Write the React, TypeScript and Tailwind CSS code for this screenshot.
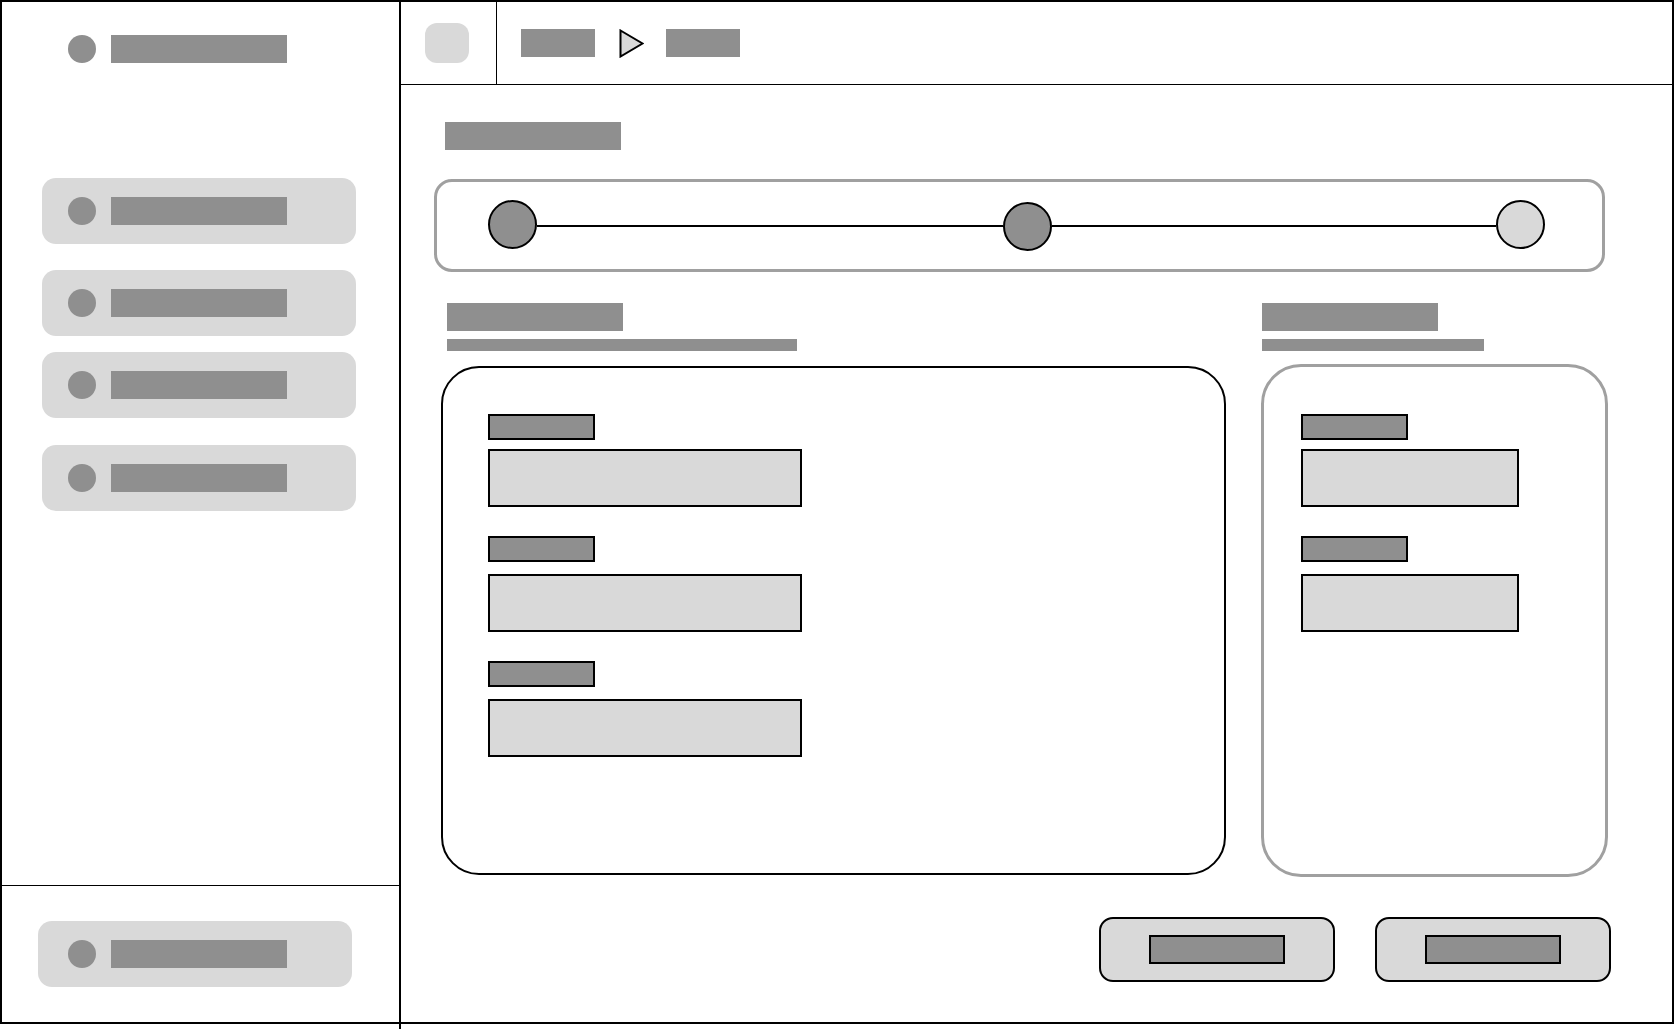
import { clsx } from "clsx";

function Dot() {
  return <span className="size-[28px] shrink-0 rounded-full bg-[#8f8f8f]" />;
}

function NavBar() {
  return <span className="h-[28px] w-[176px] shrink-0 bg-[#8f8f8f]" />;
}

function NavItem({ className }: { className?: string }) {
  return (
    <div className={clsx("flex h-[66px] w-[314px] items-center gap-[15px] rounded-[14px] bg-[#d9d9d9]", className)}>
      <Dot />
      <NavBar />
    </div>
  );
}

function Sidebar() {
  return (
    <aside className="flex h-[1027px] w-[399px] shrink-0 flex-col border-r-2 border-black">
      <div className="h-[884px] border-b border-black px-[40px] pt-[33px]">
        <div className="flex h-[28px] items-center gap-[15px] pl-[26px]">
          <Dot />
          <NavBar />
        </div>
        <NavItem className="mt-[115px] pl-[26px]" />
        <NavItem className="mt-[26px] pl-[26px]" />
        <NavItem className="mt-[16px] pl-[26px]" />
        <NavItem className="mt-[27px] pl-[26px]" />
      </div>
      <div className="pl-[36px] pt-[35px]">
        <NavItem className="pl-[30px]" />
      </div>
    </aside>
  );
}

function Header() {
  return (
    <header className="flex h-[83px] shrink-0 border-b border-black">
      <div className="flex w-[96px] items-center border-r border-black pl-[24px]">
        <button type="button" className="h-[40px] w-[44px] rounded-[12px] bg-[#d9d9d9]" />
      </div>
      <nav className="flex items-center pl-[24px]">
        <span className="h-[28px] w-[74px] bg-[#8f8f8f]" />
        <svg viewBox="0 0 25 29" className="ml-[24px] h-[29px] w-[25px]">
          <polygon points="1.5,1.5 23.5,14.5 1.5,27.5" fill="#d9d9d9" stroke="#000" strokeWidth="2" />
        </svg>
        <span className="ml-[22px] h-[28px] w-[74px] bg-[#8f8f8f]" />
      </nav>
    </header>
  );
}

function Stepper() {
  return (
    <div className="mt-[29px] flex h-[93px] w-[1171px] items-center rounded-[18px] border-[3px] border-[#a0a0a0] pl-[51px]">
      <span className="mb-[2px] size-[49px] shrink-0 rounded-full border-2 border-black bg-[#8f8f8f]" />
      <span className="h-[2px] w-[466px] bg-black" />
      <span className="mt-[2px] size-[49px] shrink-0 rounded-full border-2 border-black bg-[#8f8f8f]" />
      <span className="h-[2px] w-[444px] bg-black" />
      <span className="mb-[2px] size-[49px] shrink-0 rounded-full border-2 border-black bg-[#d9d9d9]" />
    </div>
  );
}

function Field({ inputWidth, gap, className }: { inputWidth: string; gap: string; className?: string }) {
  return (
    <div className={className}>
      <div className="h-[26px] w-[107px] border-2 border-black bg-[#8f8f8f]" />
      <div className={clsx("h-[58px] border-2 border-black bg-[#d9d9d9]", inputWidth, gap)} />
    </div>
  );
}

function Sections() {
  return (
    <div className="ml-[7px] mt-[31px] flex items-start gap-[35px]">
      <section>
        <div className="ml-[6px] h-[28px] w-[176px] bg-[#8f8f8f]" />
        <div className="ml-[6px] mt-[8px] h-[12px] w-[350px] bg-[#8f8f8f]" />
        <div className="mt-[15px] h-[509px] w-[785px] rounded-[38px] border-2 border-black pl-[45px] pt-[46px]">
          <Field inputWidth="w-[314px]" gap="mt-[9px]" />
          <Field inputWidth="w-[314px]" gap="mt-[12px]" className="mt-[29px]" />
          <Field inputWidth="w-[314px]" gap="mt-[12px]" className="mt-[29px]" />
        </div>
      </section>
      <section>
        <div className="ml-[1px] h-[28px] w-[176px] bg-[#8f8f8f]" />
        <div className="ml-[1px] mt-[8px] h-[12px] w-[222px] bg-[#8f8f8f]" />
        <div className="mt-[13px] h-[513px] w-[347px] rounded-[40px] border-[3px] border-[#a0a0a0] pl-[37px] pt-[47px]">
          <Field inputWidth="w-[218px]" gap="mt-[9px]" />
          <Field inputWidth="w-[218px]" gap="mt-[12px]" className="mt-[29px]" />
        </div>
      </section>
    </div>
  );
}

function ActionButton() {
  return (
    <button
      type="button"
      className="flex h-[65px] w-[236px] items-center justify-center rounded-[14px] border-2 border-black bg-[#d9d9d9]"
    >
      <span className="h-[29px] w-[136px] border-2 border-black bg-[#8f8f8f]" />
    </button>
  );
}

export default function App() {
  return (
    <div className="h-[1029px] w-[1674px] bg-white font-['Liberation_Sans',sans-serif]">
      <div className="flex h-[1024px] w-[1674px] items-start border-2 border-black">
        <Sidebar />
        <main className="flex h-full min-w-0 flex-1 flex-col">
          <Header />
          <div className="pl-[33px] pt-[37px]">
            <div className="ml-[11px] h-[28px] w-[176px] bg-[#8f8f8f]" />
            <Stepper />
            <Sections />
            <div className="mt-[40px] flex justify-end gap-[40px] pr-[61px]">
              <ActionButton />
              <ActionButton />
            </div>
          </div>
        </main>
      </div>
    </div>
  );
}
